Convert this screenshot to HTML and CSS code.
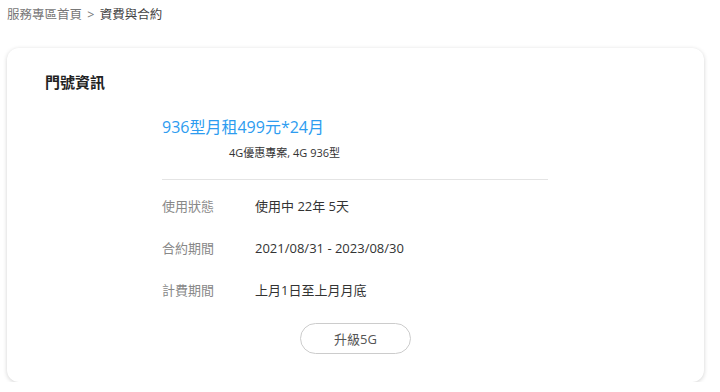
FILE: index.html
```html
<!DOCTYPE html>
<html lang="zh-Hant">
<head>
    <meta charset="UTF-8">
    <title>資費與合約</title>
    <link rel="stylesheet" href="styles.css">
</head>
<body>
    <div class="breadcrumb">
        <span class="crumb">服務專區首頁</span>
        <span class="sep">&gt;</span>
        <span class="crumb current">資費與合約</span>
    </div>
    <div class="card">
        <h2 class="card-title">門號資訊</h2>
        <div class="plan">
            <div class="plan-name">936型月租499元*24月</div>
            <div class="plan-sub">4G優惠專案, 4G 936型</div>
            <div class="divider"></div>
            <div class="row">
                <div class="label">使用狀態</div>
                <div class="value">使用中 22年 5天</div>
            </div>
            <div class="row">
                <div class="label">合約期間</div>
                <div class="value">2021/08/31 - 2023/08/30</div>
            </div>
            <div class="row">
                <div class="label">計費期間</div>
                <div class="value">上月1日至上月月底</div>
            </div>
        </div>
        <div class="actions">
            <button class="upgrade-btn">升級5G</button>
        </div>
    </div>
</body>
</html>
```
FILE: styles.css
```css
body {
    font-family: "Open Sans", "Noto Sans CJK TC", sans-serif;
    margin: 0;
    padding: 0;
    background-color: #fff;
    color: #333;
}
.breadcrumb {
    padding: 6px 7px 0;
    font-size: 12.5px;
    line-height: 18px;
    color: #777;
}
.breadcrumb .sep {
    margin: 0 2px;
}
.breadcrumb .current {
    color: #444;
}
.card {
    margin: 24px 16px 0 7px;
    height: 334px;
    box-sizing: border-box;
    border-radius: 12px;
    background-color: #fff;
    box-shadow: 0 1px 4px rgba(0,0,0,0.18);
    padding: 22px 0 0 38px;
}
.card-title {
    margin: 0;
    font-size: 15px;
    line-height: 24px;
    font-weight: bold;
    color: #222;
}
.plan {
    margin-left: 117px;
    width: 386px;
    padding-top: 20px;
}
.plan-name {
    font-size: 16px;
    line-height: 26px;
    color: #2d9cf0;
}
.plan-sub {
    margin: 5px 0 0 67px;
    font-size: 11px;
    line-height: 16px;
    color: #333;
}
.divider {
    margin-top: 18px;
    border-top: 1px solid #e4e4e4;
}
.row {
    display: flex;
    font-size: 13px;
    line-height: 20px;
    margin-top: 16px;
}
.row + .row {
    margin-top: 22px;
}
.label {
    width: 93px;
    color: #888;
}
.value {
    color: #333;
}
.actions {
    display: flex;
    justify-content: center;
    margin: 23px 0 0 -38px;
}
.upgrade-btn {
    width: 111px;
    height: 31px;
    border: 1px solid #ccc;
    border-radius: 16px;
    background-color: #fff;
    font-family: inherit;
    font-size: 13px;
    color: #555;
}
```
